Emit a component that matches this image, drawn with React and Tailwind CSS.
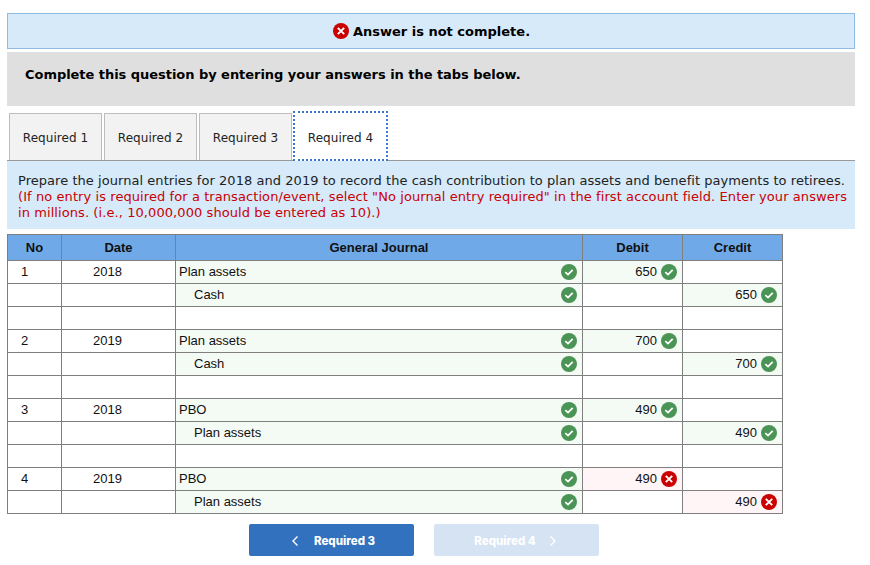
import React from "react";

const Ok = () => (
  <svg width="16" height="16" viewBox="0 0 16 16" className="shrink-0">
    <circle cx="8" cy="8" r="8" fill="#4a9455" />
    <path d="M4.3 8.2 L7 10.6 L11.7 5.8" fill="none" stroke="#fff" strokeWidth="1.8" />
  </svg>
);
const Bad = () => (
  <svg width="16" height="16" viewBox="0 0 16 16" className="shrink-0">
    <circle cx="8" cy="8" r="8" fill="#cb0000" />
    <path d="M4.8 4.8 L11.2 11.2 M11.2 4.8 L4.8 11.2" fill="none" stroke="#fff" strokeWidth="1.9" />
  </svg>
);

const rows = [
  ["1", "2018", "Plan assets", 0, "650", "", "ok"],
  ["", "", "Cash", 1, "", "650", "ok"],
  ["", "", "", 0, "", "", ""],
  ["2", "2019", "Plan assets", 0, "700", "", "ok"],
  ["", "", "Cash", 1, "", "700", "ok"],
  ["", "", "", 0, "", "", ""],
  ["3", "2018", "PBO", 0, "490", "", "ok"],
  ["", "", "Plan assets", 1, "", "490", "ok"],
  ["", "", "", 0, "", "", ""],
  ["4", "2019", "PBO", 0, "490", "", "bad"],
  ["", "", "Plan assets", 1, "", "490", "bad"],
];

const Amount = ({ value, status }) => {
  if (!value) return <td className="border border-[#7f7f7f] p-0" />;
  return (
    <td className={`border border-[#7f7f7f] p-0 ${status === "ok" ? "bg-[#f4faf4]" : "bg-[#fff4f6]"}`}>
      <div className="flex items-center justify-end gap-[4px] pr-[5px]">
        <span>{value}</span>
        {status === "ok" ? <Ok /> : <Bad />}
      </div>
    </td>
  );
};

const Tab = ({ label, active }) => (
  <div
    className={
      active
        ? "relative z-10 -mb-px flex h-[50px] w-[95px] items-center justify-center border-2 border-dotted border-[#3b78c8] bg-white pt-[3px] text-[#222]"
        : "flex h-[47px] w-[93px] items-center justify-center border border-b-0 border-[#bdbdbd] bg-[#f2f2f2] pt-[1px] text-[#222]"
    }
  >
    {label}
  </div>
);

export default function App() {
  return (
    <div className="h-[565px] w-[870px] overflow-hidden bg-white pl-[7px] pr-[15px] pt-[13px] font-['DejaVu_Sans',sans-serif] text-black">
      <div className="flex h-[36px] items-center justify-center gap-[4px] border border-[#8fbbe3] bg-[#d6eafa] pl-[1px] text-[13px] font-bold">
        <Bad />
        <span className="pt-[2px]">Answer is not complete.</span>
      </div>
      <div className="mt-[3px] h-[54px] bg-[#dfdfdf] pl-[18px] pt-[14px] text-[13px] font-bold leading-[18px] tracking-[-0.04px]">
        Complete this question by entering your answers in the tabs below.
      </div>
      <div className="mt-[6px] flex h-[49px] items-end gap-[2px] border-b border-[#999] pl-[2px] text-[12px] tracking-[0.05px]">
        <Tab label="Required 1" />
        <Tab label="Required 2" />
        <Tab label="Required 3" />
        <div className="-ml-[1px]">
          <Tab label="Required 4" active />
        </div>
      </div>
      <div className="h-[68px] bg-[#d6eafa] pl-[11px] pr-[6px] pt-[12px] text-[13px] leading-[16px] text-[#222]">
        <div className="tracking-[0.045px]">Prepare the journal entries for 2018 and 2019 to record the cash contribution to plan assets and benefit payments to retirees.</div>
        <div className="tracking-[0.08px] text-[#cb0000]">
          (If no entry is required for a transaction/event, select "No journal entry required" in the first account field. Enter your answers in millions. (i.e., 10,000,000 should be entered as 10).)
        </div>
      </div>
      <table className="mt-[5px] w-[776px] table-fixed border-collapse font-['Liberation_Sans',sans-serif] text-[13px] text-[#111]">
        <colgroup>
          <col className="w-[54px]" />
          <col className="w-[114px]" />
          <col className="w-[407px]" />
          <col className="w-[100px]" />
          <col className="w-[100px]" />
        </colgroup>
        <thead>
          <tr className="h-[26px] bg-[#6fa9e8] font-bold">
            <th className="border border-[#7f7f7f] p-0 font-bold">No</th>
            <th className="border border-[#7f7f7f] p-0 font-bold">Date</th>
            <th className="border border-[#7f7f7f] p-0 font-bold">General Journal</th>
            <th className="border border-[#7f7f7f] p-0 font-bold">Debit</th>
            <th className="border border-[#7f7f7f] p-0 font-bold">Credit</th>
          </tr>
        </thead>
        <tbody>
          {rows.map((r, i) => (
            <tr key={i} className="h-[23px]">
              <td className="border border-[#7f7f7f] p-0 pl-[13px]">{r[0]}</td>
              <td className="border border-[#7f7f7f] p-0 pl-[31px]">{r[1]}</td>
              <td className={`border border-[#7f7f7f] p-0 ${r[2] ? "bg-[#f4faf4]" : ""}`}>
                {r[2] && (
                  <div className="flex items-center justify-between pr-[5px]">
                    <span className={r[3] ? "pl-[18px]" : "pl-[3px]"}>{r[2]}</span>
                    <Ok />
                  </div>
                )}
              </td>
              <Amount value={r[4]} status={r[6]} />
              <Amount value={r[5]} status={r[6]} />
            </tr>
          ))}
        </tbody>
      </table>
      <div className="mt-[10px] flex gap-[20px] pl-[242px] font-['Inter',sans-serif] text-[11.5px] font-extrabold">
        <div className="flex h-[32px] w-[165px] items-center justify-center rounded-[2px] bg-[#3271bd] pl-[3px] text-white">
          <svg width="8" height="12" viewBox="0 0 8 12" className="mr-[15px] mt-[1px]">
            <path d="M6.5 1.5 L2 6 L6.5 10.5" fill="none" stroke="#fff" strokeWidth="1.4" />
          </svg>
          <span className="pt-[3px]">Required 3</span>
        </div>
        <div className="flex h-[32px] w-[165px] items-center justify-center rounded-[2px] bg-[#d6e3f3] pr-[2px] text-white">
          <span className="pt-[3px]">Required 4</span>
          <svg width="8" height="12" viewBox="0 0 8 12" className="ml-[13px] mt-[1px]">
            <path d="M1.5 1.5 L6 6 L1.5 10.5" fill="none" stroke="#fff" strokeWidth="1.4" />
          </svg>
        </div>
      </div>
    </div>
  );
}
